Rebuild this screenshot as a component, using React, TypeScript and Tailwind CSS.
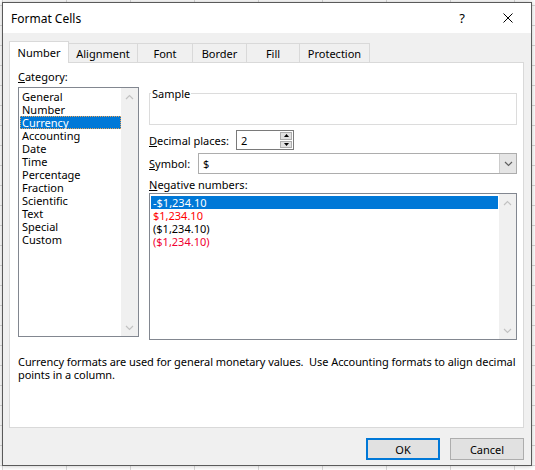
const categories = [
  'General',
  'Number',
  'Currency',
  'Accounting',
  'Date',
  'Time',
  'Percentage',
  'Fraction',
  'Scientific',
  'Text',
  'Special',
  'Custom',
];

const negatives = [
  { text: '-$1,234.10', color: 'text-white', selected: true },
  { text: '$1,234.10', color: 'text-[#ff0000]', selected: false },
  { text: '($1,234.10)', color: 'text-black', selected: false },
  { text: '($1,234.10)', color: 'text-[#f00030]', selected: false },
];

const tabs = [
  { name: 'Number', w: 'w-[60px]' },
  { name: 'Alignment', w: 'w-[69px]' },
  { name: 'Font', w: 'w-[55px]' },
  { name: 'Border', w: 'w-[54px]' },
  { name: 'Fill', w: 'w-[53px]' },
  { name: 'Protection', w: 'w-[70px]' },
];

function Chevron({ dir }: { dir: 'up' | 'down' }) {
  return (
    <svg width="9" height="6" viewBox="0 0 9 6">
      <polyline
        points={dir === 'up' ? '1,5 4.5,1.5 8,5' : '1,1 4.5,4.5 8,1'}
        fill="none"
        stroke="currentColor"
        strokeWidth="1.2"
      />
    </svg>
  );
}

function Scrollbar() {
  return (
    <div className="w-[17px] bg-[#f0f0f0] flex flex-col items-center justify-between pt-[6px] pb-[5px] text-[#c2c2c2]">
      <Chevron dir="up" />
      <Chevron dir="down" />
    </div>
  );
}

export default function App() {
  return (
    <div className="w-[535px] h-[470px] overflow-hidden bg-white bg-[linear-gradient(#d9d9d9_1px,transparent_1px),linear-gradient(90deg,#d9d9d9_1px,transparent_1px)] bg-[size:64px_20px] bg-[position:2px_5px] pt-[2px] pl-[2px] font-['Noto_Sans',sans-serif] text-[11px] leading-[13px] text-black">
      <div className="w-[530px] h-[464px] border border-[#5a5a5a] bg-[#f0f0f0] flex flex-col shadow-[0_0_5px_rgba(0,0,0,0.25)]">
        {/* title bar */}
        <div className="h-[30px] bg-white flex items-center pl-[8px] shrink-0 text-[12px]">
          <span className="flex-1">Format Cells</span>
          <div className="w-[46px] h-full flex items-center justify-center text-[13px]">?</div>
          <div className="w-[46px] h-full flex items-center justify-center">
            <svg width="10" height="10" viewBox="0 0 10 10">
              <path d="M0.5 0.5 L9.5 9.5 M9.5 0.5 L0.5 9.5" stroke="#000" strokeWidth="1" />
            </svg>
          </div>
        </div>

        <div className="flex-1 flex flex-col pt-[8px] pl-[6px] pr-[7px]">
          {/* tabs */}
          <div className="flex items-end h-[21px]">
            {tabs.map((t, i) =>
              i === 0 ? (
                <div
                  key={t.name}
                  className={`${t.w} h-[22px] -mb-[1px] relative z-10 bg-white border border-b-0 border-[#d9d9d9] flex items-center justify-center pb-[1px]`}
                >
                  {t.name}
                </div>
              ) : (
                <div
                  key={t.name}
                  className={`${t.w} h-[19px] bg-[#f0f0f0] border-t border-r border-[#d9d9d9] flex items-center justify-center`}
                >
                  {t.name}
                </div>
              )
            )}
          </div>

          {/* tab panel */}
          <div className="h-[366px] bg-white border border-[#d9d9d9] flex flex-col">
            <div className="flex pt-[7px] pl-[8px]">
              {/* category column */}
              <div className="w-[121px] flex flex-col">
                <div className="h-[13px]">
                  <span className="underline underline-offset-1">C</span>ategory:
                </div>
                <div className="mt-[4px] h-[250px] border border-[#828790] flex">
                  <div className="flex-1 pt-[2px] pl-[1px]">
                    {categories.map((c) =>
                      c === 'Currency' ? (
                        <div
                          key={c}
                          className="h-[13px] leading-[11px] px-[1px] bg-[#0078d7] text-white border border-dotted border-[#e9a35a]"
                        >
                          {c}
                        </div>
                      ) : (
                        <div key={c} className="h-[13px] leading-[13px] px-[2px]">
                          {c}
                        </div>
                      )
                    )}
                  </div>
                  <Scrollbar />
                </div>
              </div>

              {/* right column */}
              <div className="w-[368px] ml-[10px] pt-[23px] flex flex-col">
                <div className="h-[32px] border border-[#dcdcdc]">
                  <span className="relative -top-[7px] ml-[1px] bg-white px-[1px]">Sample</span>
                </div>

                <div className="mt-[5px] flex items-center h-[20px]">
                  <span className="w-[87px] whitespace-nowrap">
                    <span className="underline underline-offset-1">D</span>ecimal places:
                  </span>
                  <div className="w-[58px] h-[20px] border border-[#7a7a7a] bg-white flex items-center">
                    <span className="flex-1 pl-[4px]">2</span>
                    <div className="w-[12px] h-[18px] flex flex-col gap-[1px] mr-[1px] py-[1px]">
                      <div className="flex-1 bg-[#e1e1e1] border border-[#adadad] flex items-center justify-center">
                        <svg width="5" height="3" viewBox="0 0 5 3">
                          <polygon points="0,3 2.5,0 5,3" fill="#000" />
                        </svg>
                      </div>
                      <div className="flex-1 bg-[#e1e1e1] border border-[#adadad] flex items-center justify-center">
                        <svg width="5" height="3" viewBox="0 0 5 3">
                          <polygon points="0,0 2.5,3 5,0" fill="#000" />
                        </svg>
                      </div>
                    </div>
                  </div>
                </div>

                <div className="mt-[3px] flex items-center h-[21px]">
                  <span className="w-[49px] whitespace-nowrap">
                    <span className="underline underline-offset-1">S</span>ymbol:
                  </span>
                  <div className="flex-1 h-[21px] border border-[#adadad] bg-white flex">
                    <span className="flex-1 pl-[4px] flex items-center">$</span>
                    <div className="w-[17px] bg-[#e5e5e5] border-l border-[#cccccc] flex items-center justify-center text-[#606060]">
                      <Chevron dir="down" />
                    </div>
                  </div>
                </div>

                <div className="mt-[4px] h-[13px]">
                  <span className="underline underline-offset-1">N</span>egative numbers:
                </div>

                <div className="mt-[2px] h-[147px] border border-[#828790] flex">
                  <div className="flex-1 pt-[2px] pl-[1px] pr-[1px]">
                    {negatives.map((n, i) => (
                      <div
                        key={i}
                        className={`h-[13px] leading-[13px] px-[2px] ${n.color} ${n.selected ? 'bg-[#0078d7]' : ''}`}
                      >
                        {n.text}
                      </div>
                    ))}
                  </div>
                  <Scrollbar />
                </div>
              </div>
            </div>

            <p className="mt-[15px] pl-[8px] whitespace-nowrap tracking-[-0.07px]">
              Currency formats are used for general monetary values.&nbsp; Use Accounting formats to align decimal
              <br />
              points in a column.
            </p>
          </div>

          {/* buttons */}
          <div className="mt-[10px] flex justify-end gap-[10px]">
            <button className="w-[74px] h-[22px] bg-[#e1e1e1] border-2 border-[#0078d7] flex items-center justify-center">
              OK
            </button>
            <button className="w-[74px] h-[22px] bg-[#e1e1e1] border border-[#adadad] flex items-center justify-center">
              Cancel
            </button>
          </div>
        </div>
      </div>
    </div>
  );
}
